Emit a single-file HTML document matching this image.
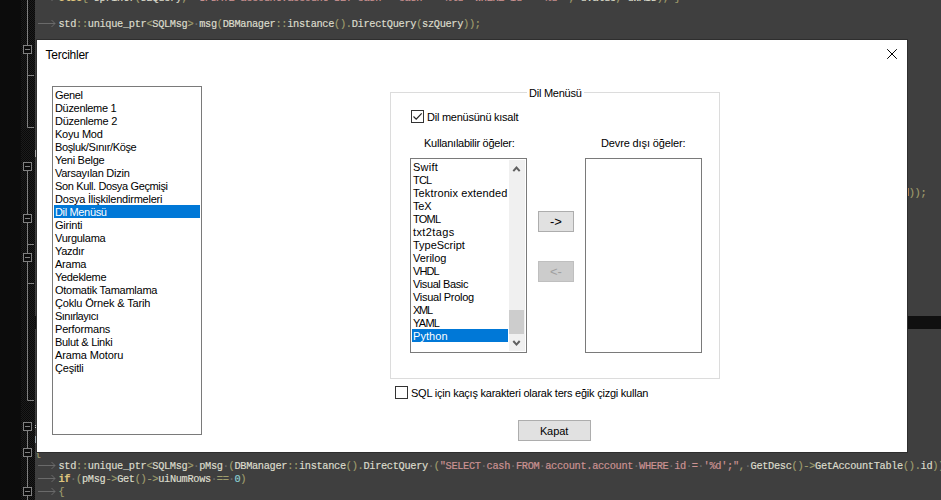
<!DOCTYPE html>
<html lang="tr">
<head>
<meta charset="utf-8">
<title>Tercihler</title>
<style>
html,body{margin:0;padding:0;}
body{width:941px;height:500px;overflow:hidden;position:relative;background:#3f3f3f;font-family:"Liberation Sans",sans-serif;}
.abs{position:absolute;}
/* ---------- editor background ---------- */
#lnum{left:0;top:0;width:21px;height:500px;background:#0c0c0c;}
#fold{left:21px;top:0;width:14px;height:500px;background:repeating-conic-gradient(#090909 0% 25%,#1c1c1c 0% 50%) 0 0/2px 2px;}
#fold svg{position:absolute;left:0;top:0;}
.cl{left:35px;height:13px;line-height:13px;white-space:pre;font-family:"Liberation Mono",monospace;font-size:10.3px;letter-spacing:-0.317px;color:#dcdccc;-webkit-text-stroke:0.18px;}
.op{color:#9f9d6d;}
.st{color:#cc9393;}
.kw{color:#dfc47d;font-weight:bold;}
.nu{color:#8cd0d3;}
.ws{color:#6e6e6e;}
.tab{display:inline-block;width:23.46px;height:13px;vertical-align:top;position:relative;}
.tab svg{position:absolute;left:2px;top:-1px;}
#curline{left:35px;top:316px;width:906px;height:13px;background:#101010;}
/* ---------- dialog ---------- */
#dlg{left:37px;top:40px;width:870px;height:412px;background:#fff;box-shadow:0 0 0 1px #2e2e2e;color:#000;font-size:11px;}
#title{left:8.5px;top:8px;font-size:12px;line-height:14px;letter-spacing:-0.25px;}
#close{left:850px;top:9px;}
.lb{border:1px solid #7a7a7a;background:#fff;box-sizing:border-box;}
.it{position:absolute;left:2px;height:13px;line-height:15px;white-space:nowrap;letter-spacing:-0.25px;}
.sel{background:#0078d7;color:#fff;}
.lbl{position:absolute;height:13px;line-height:15px;white-space:nowrap;letter-spacing:-0.25px;}
.cb{position:absolute;width:13px;height:13px;box-sizing:border-box;border:1px solid #333;background:#fff;}
.btn{position:absolute;box-sizing:border-box;border:1px solid #adadad;background:#e1e1e1;text-align:center;line-height:21px;}
.btn.dis{background:#cccccc;border-color:#bfbfbf;color:#a0a0a0;}
#grp{left:353px;top:52px;width:330px;height:287px;border:1px solid #dcdcdc;box-sizing:border-box;}
#grplbl{left:490px;top:46px;background:#fff;padding:0 2px;}
</style>
</head>
<body>
<div id="lnum" class="abs"></div>
<div id="fold" class="abs"><svg width="14" height="500" viewBox="0 0 14 500"><path d="M6.5 0V45.0M6.5 54.0V127.5M6.5 171.0V214.0M6.5 223.0V253.0M6.5 262.0V400.5M6.5 431.0V448.0M6.5 457.0V487.0M6.5 496.0V500M6.5 75.5H13M6.5 127.5H13M6.5 244.5H13M6.5 283.5H13M6.5 400.5H13" stroke="#808080" stroke-width="1" fill="none"/><rect x="2.5" y="45.5" width="8" height="8" fill="#0c0c0c" stroke="#808080" stroke-width="1"/><path d="M4 49.5H9" stroke="#808080" stroke-width="1"/><rect x="2.5" y="162.5" width="8" height="8" fill="#0c0c0c" stroke="#808080" stroke-width="1"/><path d="M4 166.5H9" stroke="#808080" stroke-width="1"/><rect x="2.5" y="214.5" width="8" height="8" fill="#0c0c0c" stroke="#808080" stroke-width="1"/><path d="M4 218.5H9" stroke="#808080" stroke-width="1"/><rect x="2.5" y="253.5" width="8" height="8" fill="#0c0c0c" stroke="#808080" stroke-width="1"/><path d="M4 257.5H9" stroke="#808080" stroke-width="1"/><rect x="2.5" y="422.5" width="8" height="8" fill="#0c0c0c" stroke="#808080" stroke-width="1"/><path d="M4 426.5H9" stroke="#808080" stroke-width="1"/><rect x="2.5" y="448.5" width="8" height="8" fill="#0c0c0c" stroke="#808080" stroke-width="1"/><path d="M4 452.5H9" stroke="#808080" stroke-width="1"/><rect x="2.5" y="487.5" width="8" height="8" fill="#0c0c0c" stroke="#808080" stroke-width="1"/><path d="M4 491.5H9" stroke="#808080" stroke-width="1"/></svg></div>

<div id="code">
<div class="abs cl" style="top:-8px"><span class="tab"><svg width="20" height="13" viewBox="0 0 20 13"><path d="M1 6.5H18M14.5 3L18 6.5L14.5 10" stroke="#6a6a6a" stroke-width="1" fill="none"/></svg></span><span class="kw">else</span><span class="op">{</span><span class="ws">·</span>sprintf<span class="op">(</span>szQuery<span class="op">,</span><span class="ws">·</span><span class="st">"UPDATE<span class="ws">·</span>account.account<span class="ws">·</span>SET<span class="ws">·</span>cash<span class="ws">·</span>=<span class="ws">·</span>cash<span class="ws">·</span>-<span class="ws">·</span>'%lu'<span class="ws">·</span>WHERE<span class="ws">·</span>id<span class="ws">·</span>=<span class="ws">·</span>'%d'"</span><span class="op">,</span><span class="ws">·</span>dValue<span class="op">,</span><span class="ws">·</span>dwAID<span class="op">);</span><span class="ws">·</span><span class="op">}</span></div>
<div class="abs cl" style="top:18px"><span class="tab"><svg width="20" height="13" viewBox="0 0 20 13"><path d="M1 6.5H18M14.5 3L18 6.5L14.5 10" stroke="#6a6a6a" stroke-width="1" fill="none"/></svg></span>std<span class="op">::</span>unique_ptr<span class="op">&lt;</span>SQLMsg<span class="op">&gt;</span><span class="ws">·</span>msg<span class="op">(</span>DBManager<span class="op">::</span>instance<span class="op">().</span>DirectQuery<span class="op">(</span>szQuery<span class="op">));</span></div>
<div class="abs cl" style="top:447px"><span class="op">{</span></div>
<div class="abs cl" style="top:460px"><span class="tab"><svg width="20" height="13" viewBox="0 0 20 13"><path d="M1 6.5H18M14.5 3L18 6.5L14.5 10" stroke="#6a6a6a" stroke-width="1" fill="none"/></svg></span>std<span class="op">::</span>unique_ptr<span class="op">&lt;</span>SQLMsg<span class="op">&gt;</span><span class="ws">·</span>pMsg<span class="ws">·</span><span class="op">(</span>DBManager<span class="op">::</span>instance<span class="op">().</span>DirectQuery<span class="ws">·</span><span class="op">(</span><span class="st">"SELECT<span class="ws">·</span>cash<span class="ws">·</span>FROM<span class="ws">·</span>account.account<span class="ws">·</span>WHERE<span class="ws">·</span>id<span class="ws">·</span>=<span class="ws">·</span>'%d';"</span><span class="op">,</span><span class="ws">·</span>GetDesc<span class="op">()-&gt;</span>GetAccountTable<span class="op">().</span>id<span class="op">));</span></div>
<div class="abs cl" style="top:473px"><span class="tab"><svg width="20" height="13" viewBox="0 0 20 13"><path d="M1 6.5H18M14.5 3L18 6.5L14.5 10" stroke="#6a6a6a" stroke-width="1" fill="none"/></svg></span><span class="kw">if</span><span class="ws">·</span><span class="op">(</span>pMsg<span class="op">-&gt;</span>Get<span class="op">()-&gt;</span>uiNumRows<span class="ws">·</span><span class="op">==</span><span class="ws">·</span><span class="nu">0</span><span class="op">)</span></div>
<div class="abs cl" style="top:486px"><span class="tab"><svg width="20" height="13" viewBox="0 0 20 13"><path d="M1 6.5H18M14.5 3L18 6.5L14.5 10" stroke="#6a6a6a" stroke-width="1" fill="none"/></svg></span><span class="op">{</span></div>
<div class="abs cl" style="top:187px;left:902.88px">d<span class="op">));</span></div>
</div>
<div id="curline" class="abs"></div>
<div class="abs" style="left:35px;top:150px;width:1px;height:7px;background:#a8a8a8"></div>
<div class="abs" style="left:35px;top:425px;width:1px;height:1px;background:#b8b8b8"></div>
<div class="abs" style="left:35px;top:427px;width:1px;height:1px;background:#d0d0d0"></div>
<div class="abs" style="left:35px;top:436px;width:1px;height:7px;background:#9aa6ae"></div>


<div id="dlg" class="abs">
  <div id="title" class="abs">Tercihler</div>
  <svg id="close" class="abs" width="10" height="10" viewBox="0 0 10 10"><path d="M0.2 0.2L9.8 9.8M9.8 0.2L0.2 9.8" stroke="#000" stroke-width="1" fill="none"/></svg>

  <div id="list1" class="abs lb" style="left:15px;top:46px;width:150px;height:349px;">
<div class="it" style="top:1px;letter-spacing:-0.332px;">Genel</div>
<div class="it" style="top:14px;letter-spacing:-0.321px;">Düzenleme 1</div>
<div class="it" style="top:27px;letter-spacing:-0.257px;">Düzenleme 2</div>
<div class="it" style="top:40px;letter-spacing:-0.241px;">Koyu Mod</div>
<div class="it" style="top:53px;letter-spacing:-0.361px;">Boşluk/Sınır/Köşe</div>
<div class="it" style="top:66px;letter-spacing:-0.290px;">Yeni Belge</div>
<div class="it" style="top:79px;letter-spacing:-0.261px;">Varsayılan Dizin</div>
<div class="it" style="top:92px;letter-spacing:-0.367px;">Son Kull. Dosya Geçmişi</div>
<div class="it" style="top:105px;letter-spacing:-0.216px;">Dosya İlişkilendirmeleri</div>
<div class="it sel" style="top:118px;letter-spacing:-0.343px;left:1px;width:145px;padding-left:1px;">Dil Menüsü</div>
<div class="it" style="top:131px;letter-spacing:-0.219px;">Girinti</div>
<div class="it" style="top:144px;letter-spacing:-0.266px;">Vurgulama</div>
<div class="it" style="top:157px;letter-spacing:-0.314px;">Yazdır</div>
<div class="it" style="top:170px;letter-spacing:-0.241px;">Arama</div>
<div class="it" style="top:183px;letter-spacing:-0.315px;">Yedekleme</div>
<div class="it" style="top:196px;letter-spacing:-0.255px;">Otomatik Tamamlama</div>
<div class="it" style="top:209px;letter-spacing:-0.160px;">Çoklu Örnek &amp; Tarih</div>
<div class="it" style="top:222px;letter-spacing:-0.519px;">Sınırlayıcı</div>
<div class="it" style="top:235px;letter-spacing:-0.166px;">Performans</div>
<div class="it" style="top:248px;letter-spacing:-0.297px;">Bulut &amp; Linki</div>
<div class="it" style="top:261px;letter-spacing:-0.109px;">Arama Motoru</div>
<div class="it" style="top:274px;letter-spacing:-0.208px;">Çeşitli</div>
</div>


  <div class="cb" style="left:374px;top:70px;"><svg width="11" height="11" viewBox="0 0 11 11" style="position:absolute;left:0;top:0"><path d="M1.5 5.5L4.2 8.2L9.7 2.3" stroke="#222" stroke-width="1.2" fill="none"/></svg></div>
  <div class="lbl" style="left:390px;top:70px;">Dil menüsünü kısalt</div>
  <div class="lbl" style="left:387px;top:96px;">Kullanılabilir öğeler:</div>
  <div class="lbl" style="left:564px;top:96px;letter-spacing:-0.13px;">Devre dışı öğeler:</div>
  <div id="list2" class="abs lb" style="left:373px;top:118px;width:117px;height:195px;">
<div class="it" style="top:1px;letter-spacing:0.271px;">Swift</div>
<div class="it" style="top:14px;letter-spacing:-0.827px;">TCL</div>
<div class="it" style="top:27px;letter-spacing:0.114px;">Tektronix extended</div>
<div class="it" style="top:40px;letter-spacing:-0.190px;">TeX</div>
<div class="it" style="top:53px;letter-spacing:-0.765px;">TOML</div>
<div class="it" style="top:66px;letter-spacing:0.384px;">txt2tags</div>
<div class="it" style="top:79px;letter-spacing:-0.017px;">TypeScript</div>
<div class="it" style="top:92px;letter-spacing:-0.034px;">Verilog</div>
<div class="it" style="top:105px;letter-spacing:-0.936px;">VHDL</div>
<div class="it" style="top:118px;letter-spacing:-0.393px;">Visual Basic</div>
<div class="it" style="top:131px;letter-spacing:-0.287px;">Visual Prolog</div>
<div class="it" style="top:144px;letter-spacing:-1.242px;">XML</div>
<div class="it" style="top:157px;letter-spacing:-0.735px;">YAML</div>
<div class="it sel" style="top:170px;letter-spacing:0.058px;left:1px;width:95px;padding-left:1px;">Python</div>
    <div id="sb" class="abs" style="left:98px;top:1px;width:16px;height:191px;background:#f0f0f0;">
      <svg class="abs" style="left:0;top:0" width="16" height="191" viewBox="0 0 16 191">
        <path d="M4.3 11.2L7.5 7.6L10.7 11.2" stroke="#606060" stroke-width="2" fill="none"/>
        <path d="M4.3 181L7.5 184.6L10.7 181" stroke="#606060" stroke-width="2" fill="none"/>
        <rect x="0" y="150" width="15" height="24" fill="#cdcdcd"/>
      </svg>
    </div>
  </div>
  <div class="btn" style="left:501px;top:171px;width:36px;height:21px;font-size:13px;line-height:19px;">-&gt;</div>
  <div class="btn dis" style="left:501px;top:221px;width:36px;height:21px;font-size:13px;line-height:19px;">&lt;-</div>
  <div id="list3" class="abs lb" style="left:548px;top:118px;width:117px;height:195px;"></div>
  <div class="cb" style="left:358px;top:346px;"></div>
  <div class="lbl" style="left:374px;top:346px;letter-spacing:-0.23px;">SQL için kaçış karakteri olarak ters eğik çizgi kullan</div>
  <div class="btn" style="left:481px;top:380px;width:73px;height:21px;letter-spacing:-0.1px;text-indent:-1px;">Kapat</div>
  <div id="grp" class="abs"></div>
  <div id="grplbl" class="lbl">Dil Menüsü</div>
</div>
</body>
</html>
